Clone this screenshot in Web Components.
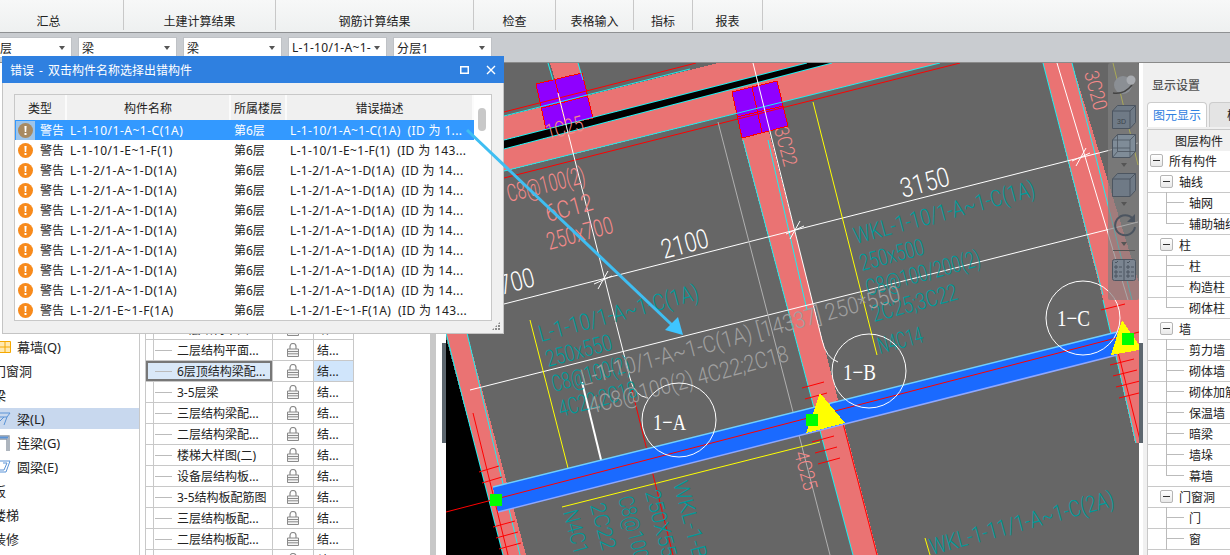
<!doctype html>
<html lang="zh">
<head>
<meta charset="utf-8">
<title>错误</title>
<style>
  html, body { margin: 0; height: 100%; overflow: hidden; background: #fff; }
  body { font: 12px "Noto Sans", "Noto Sans CJK SC", sans-serif; color: #222; }
</style>
</head>
<body>
<gd-app></gd-app>
<script>
const FONT = `"Noto Sans", "Noto Sans CJK SC", sans-serif`;

class GdRibbon extends HTMLElement {
  constructor() {
    super();
    this.attachShadow({ mode: "open" });
    const groups = [["汇总", 124, 26], ["土建计算结果", 152], ["钢筋计算结果", 198], ["检查", 82], ["表格输入", 78], ["指标", 59], ["报表", 70]];
    this.shadowRoot.innerHTML = `
      <style>
        :host { display: flex; height: 32px; background: linear-gradient(#f7f8f8, #eef0f0); border-bottom: 1px solid #8f9193; box-sizing: content-box; }
        div { box-sizing: border-box; height: 30px; border-right: 1px solid #c8c8c8; text-align: center; padding-top: 13px; line-height: 18px; font-size: 12px; color: #222; }
      </style>
      ${groups.map(([name, w, pr = 0]) => `<div style="width:${w}px;padding-right:${pr}px">${name}</div>`).join("")}
    `;
  }
}
customElements.define("gd-ribbon", GdRibbon);

class GdSelect extends HTMLElement {
  constructor() {
    super();
    this.attachShadow({ mode: "open" });
    this.shadowRoot.innerHTML = `
      <style>
        :host { display: flex; align-items: center; box-sizing: border-box; width: 99px; height: 21px; background: #fff; border: 1px solid #bfc2c6; padding: 0 3px; font-size: 12px; color: #222; white-space: nowrap; overflow: hidden; }
        .v { flex: 1; overflow: hidden; letter-spacing: .3px; }
        .a { width: 0; height: 0; margin: 0 3px 0 3px; border: 3.5px solid transparent; border-top: 4px solid #555; border-bottom: 0; }
      </style>
      <span class="v"><slot></slot></span><span class="a"></span>
    `;
  }
}
customElements.define("gd-select", GdSelect);

class GdToolbar extends HTMLElement {
  constructor() {
    super();
    this.attachShadow({ mode: "open" });
    this.shadowRoot.innerHTML = `
      <style>
        :host { display: flex; gap: 6px; height: 25px; padding-top: 4px; background: #c9ccd0; border-bottom: 1px solid #8a8a8a; }
        .first { margin-left: -27px; padding-left: 26px; }
      </style>
      <gd-select class="first">层</gd-select>
      <gd-select>梁</gd-select>
      <gd-select>梁</gd-select>
      <gd-select>L-1-10/1-A~1-</gd-select>
      <gd-select>分层1</gd-select>
    `;
  }
}
customElements.define("gd-toolbar", GdToolbar);

class GdNav extends HTMLElement {
  constructor() {
    super();
    this.attachShadow({ mode: "open" });
    const icons = {
      wall: `<svg width="11" height="12" viewBox="0 0 11 12"><path d="M0 .5h10.5v11H0M0 6h10.5M5 .5v11" fill="#ffe9b0" stroke="#f5a800"/></svg>`,
      beam: `<svg width="11" height="14" viewBox="0 0 11 14"><path d="M0 1h10L7 5H0M7 5l-3 8M0 9l4-4" fill="none" stroke="#5a93d6"/></svg>`,
      link: `<svg width="11" height="16" viewBox="0 0 11 16"><path d="M0 1h9v15M0 4h7v12" fill="none" stroke="#8c96a3" stroke-width="1.4"/><path d="M0 2.5h8" stroke="#5a93d6" stroke-width="2"/></svg>`,
      ring: `<svg width="11" height="14" viewBox="0 0 11 14"><path d="M0 1h10L6 12H0M3 3h4L4 10H0" fill="none" stroke="#5a93d6"/></svg>`
    };
    const rows = [["wall", "幕墙(Q)"], ["", "门窗洞"], ["", "梁"], ["beam", "梁(L)", true], ["link", "连梁(G)"], ["ring", "圆梁(E)"], ["", "板"], ["", "楼梯"], ["", "装修"]];
    this.shadowRoot.innerHTML = `
      <style>
        :host { display: flex; flex-direction: column; gap: 3px; box-sizing: border-box; width: 140px; padding-top: 273px; border-right: 1px solid #c8c8c8; overflow: hidden; font-size: 13px; color: #222; }
        .r { display: flex; align-items: center; flex: none; height: 21px; white-space: nowrap; }
        .r.on { background: #c8d8ee; }
        .i { display: flex; width: 17px; }
        .t { margin-left: -7px; }
      </style>
      ${rows.map(([icon, text, on]) => `<div class="r${on ? " on" : ""}">${icon ? `<span class="i">${icons[icon]}</span>${text}` : `<span class="t">${text}</span>`}</div>`).join("")}
    `;
  }
}
customElements.define("gd-nav", GdNav);

class GdLayerTable extends HTMLElement {
  constructor() {
    super();
    this.attachShadow({ mode: "open" });
    const names = ["二层结构平面...", "二层结构平面...", "6层顶结构梁配...", "3-5层梁", "三层结构梁配...", "二层结构梁配...", "楼梯大样图(二)", "设备层结构板...", "3-5结构板配筋图", "三层结构板配...", "二层结构板配...", ""];
    const lock = `<svg width="12" height="14" viewBox="0 0 12 14"><path d="M3 6V3.5a3 3 0 0 1 6 0V6" fill="none" stroke="#8a8a8a" stroke-width="1.2"/><path d="M.5 6h11v7.500H.5zM.5 8.500h11M.5 10.800h11" fill="#f4f4f4" stroke="#8a8a8a"/></svg>`;
    this.shadowRoot.innerHTML = `
      <style>
        :host { display: block; box-sizing: border-box; width: 209px; margin-left: 5px; padding-top: 256px; overflow: hidden; font-size: 12px; color: #222; border-left: 1px solid #c8c8c8; }
        .r { display: grid; grid-template-columns: 8px 119px 41px 40px; height: 21px; box-sizing: border-box; border-bottom: 1px solid #c8c8c8; }
        .r > div { display: flex; align-items: center; white-space: nowrap; border-right: 1px solid #c8c8c8; }
        .name::before { content: ""; width: 17px; height: 1px; margin: 0 5px 0 1px; background: #bbb; flex: none; }
        .lock { justify-content: center; }
        .kind { padding-left: 3px; }
        .on .kind { background: #d0e5fb; }
        .on .first, .on .name { background: #d9e8f8; }
        .on .first { box-shadow: inset 2px 2px 0 #777, inset 0 -2px 0 #777; border-right: 0; }
        .on .name { box-shadow: inset -2px 2px 0 #777, inset 0 -2px 0 #777; }
      </style>
      ${names.map((n, i) => `
        <div class="r${i === 2 ? " on" : ""}">
          <div class="first"></div><div class="name">${n}</div><div class="lock">${lock}</div><div class="kind">结...</div>
        </div>`).join("")}
    `;
  }
}
customElements.define("gd-layer-table", GdLayerTable);

class GdCadView extends HTMLElement {
  constructor() {
    super();
    this.attachShadow({ mode: "open" });
    const L = (x1, y1, x2, y2, c = "#fff", w = 1) => `<line x1="${x1}" y1="${y1}" x2="${x2}" y2="${y2}" stroke="${c}" stroke-width="${w}"/>`;
    const P = (pts, c, extra = "") => `<polygon points="${pts}" fill="${c}" ${extra}/>`;
    const T = (x, y, a, len, size, c, s, fam = "c") =>
      `<text class="${fam}" transform="translate(${x} ${y}) rotate(${a})" font-size="${size}" fill="${c}" textLength="${len}" lengthAdjust="spacingAndGlyphs">${s}</text>`;
    const X = (x, y) => L(x - 5, y + 9, x + 5, y - 9) + L(x - 9, y + 4, x + 9, y - 4);
    const PINK = "#ea7373", CY = "#19f0f0", TEAL = "#009a9a", SALMON = "#f58a8a", GR = "#a0a0a0";
    const hatch = (x, y, n, w = 24, step = 11) => { let s = ""; for (let i = 0; i < n; i++) s += L(x + i * 3, y + i * step, x + i * 3 + w, y + i * step - 6, "#f00"); return s; };
    const square = (pts, cross) => P(pts, "#8f00ff", `stroke="#f00" stroke-width="1"`) + cross;

    this.shadowRoot.innerHTML = `
      <style>
        :host { display: block; width: 693px; overflow: hidden; background: #666; }
        svg { display: block; }
        .c { font-family: Roboto, "Liberation Sans", sans-serif; font-weight: 300; }
        .s { font-family: "Liberation Serif", serif; }
      </style>
      <svg width="693" height="492" viewBox="446 63 693 492" shape-rendering="crispEdges">
        ${P("446,338 504,555 446,555", "#000")}

        ${P("550,63 578,63 597,130 572,136", PINK)}
        ${P("741,135 768,128 878,555 853,555", PINK)}
        ${P("1043,63 1072,63 1139,283 1139,443 1135,443 1103,300", PINK)}
        ${P("446,333 467,333 526,555 503,555", PINK)}

        ${P("446,131 718,63 940,63 446,186", PINK)}
        ${P("446,155 807,63 832,63 446,164", "#000")}

        ${square("536,84 582,73 593,118 546,129", L(542, 108, 587, 96, "#f00") + L(555, 80, 566, 125, "#f00"))}
        ${square("732,92 777,81 788,126 742,138", L(737, 117, 783, 106, "#f00") + L(752, 87, 762, 132, "#f00"))}

        <g shape-rendering="geometricPrecision">
        ${L(504, 112, 696, 63, "#f00")}
        ${L(504, 116, 690, 69, CY)}
        ${L(504, 140, 807, 63, CY)}
        ${L(504, 149, 832, 63, CY)}
        ${L(504, 171, 940, 63, CY)}
        ${L(504, 178, 960, 63, "#f00")}
        ${L(548, 63, 553, 80, CY)}${L(578, 63, 583, 80, CY)}
        ${L(743, 140, 788, 310, CY)}${L(768, 140, 807, 310, CY)}${L(1043, 63, 1103, 295, CY)}${L(1072, 63, 1132, 300, CY)}${L(1103, 300, 1136, 443, CY)}
        ${L(446, 333, 503, 555, CY)}${L(467, 333, 520, 555, CY)}
        ${L(788, 310, 853, 555, CY)}

        ${L(504, 304, 1138, 143)}
        ${L(470, 390, 1138, 222)}
        ${X(603, 280)}${X(795, 230)}${X(1081, 157)}
        ${L(558, 93, 610, 300)}<path d="M610 300L630 378Q634 396 648 398" fill="none" stroke="#fff"/>
        ${L(582, 382, 604, 472, "#fff", 2)}
        ${L(753, 63, 812, 300)}<path d="M812 300L822 340Q826 358 838 362" fill="none" stroke="#fff"/>
        ${L(718, 122, 830, 555, "#b0b0b0")}
        ${L(1057, 63, 1128, 300)}
        ${L(813, 102, 877, 355, "#ff0")}
        ${L(530, 320, 568, 468, "#ff0")}
        ${L(562, 507, 820, 442, "#ff0")}
        ${L(925, 538, 930, 555, "#ff0")}
        ${L(1113, 63, 1138, 165, "#ff0")}
        ${L(632, 390, 673, 555, "#f00")}
        ${L(837, 400, 877, 555, "#f00")}
        ${L(1115, 340, 1140, 440, "#f00")}
        ${L(473, 413, 508, 555, "#f00")}

        ${T(548, 140, -15, 38, 22, SALMON, "1C25")}
        ${T(509, 202, -14, 80, 24, SALMON, "C8@100(2)")}
        ${T(548, 222, -15, 48, 24, SALMON, "6C12")}
        ${T(549, 250, -15, 68, 24, SALMON, "250x700")}
        ${T(774, 129, 75, 40, 20, SALMON, "3C22")}
        ${T(1084, 73, 75, 40, 20, SALMON, "3C20")}
        ${T(794, 453, 75, 40, 20, SALMON, "4C25")}

        ${T(664, 259, -15, 48, 27, "#fff", "2100")}
        ${T(490, 298, -15, 48, 27, "#fff", "1700")}
        ${T(903, 198, -15, 50, 27, "#fff", "3150")}

        ${T(856, 244, -15, 187, 23, TEAL, "WKL-1-10/1-A~1-C(1A)")}
        ${T(862, 271, -15, 66, 23, TEAL, "250x500")}
        ${T(868, 296, -15, 118, 23, TEAL, "C8@100/200(2)")}
        ${T(874, 322, -15, 88, 23, TEAL, "2C25;3C22")}
        ${T(880, 354, -15, 46, 23, TEAL, "N4C14")}
        ${T(541, 342, -15, 165, 23, TEAL, "L-1-10/1-A~1-C(1A)")}
        ${T(548, 367, -15, 68, 23, TEAL, "250x550")}
        ${T(554, 392, -15, 80, 23, TEAL, "C8@100(2)")}
        ${T(561, 417, -15, 80, 23, TEAL, "4C22;2C18")}
        ${T(932, 555, -15, 190, 23, TEAL, "WKL-1-11/1-A~1-C(2A)")}
        ${T(673, 483, 75, 80, 21, TEAL, "WKL-1-B")}
        ${T(645, 492, 75, 80, 21, TEAL, "250X550")}
        ${T(618, 498, 75, 65, 21, TEAL, "C8@100")}
        ${T(590, 505, 75, 48, 21, TEAL, "2C22")}
        ${T(563, 512, 75, 55, 21, TEAL, "N4C14")}

        ${T(583, 386, -15, 330, 23, GR, "L-1-10/1-A~1-C(1A) [14337] 250*550")}
        ${T(591, 414, -15, 206, 23, GR, "4C8@100(2) 4C22;2C18")}
        </g>

        ${P("493,487 1117,332 1117,355 498,512", "#1a6aff")}
        <g shape-rendering="geometricPrecision">
        ${L(493, 487, 1117, 332, "#6fd0ff", 1.5)}
        ${L(498, 512, 1117, 355, "#8fa8ff", 1.5)}
        ${L(446, 512, 1120, 337, "#f00")}
        ${L(1120, 337, 1139, 332, "#f00")}
        ${hatch(479, 472, 2, 20)}
        ${hatch(493, 527, 3, 22)}
        ${hatch(802, 388, 2, 22)}
        ${hatch(812, 442, 3, 22)}
        ${hatch(1101, 310, 1, 24)}
        ${hatch(1110, 365, 4, 24)}
        </g>

        ${P("820,393 845,423 806,433", "#ff0")}
        ${P("1122,320 1139,345 1139,350 1111,355", "#ff0")}
        ${P("490,494 502,494 502,506 490,506", "#0f0")}
        ${P("806,414 818,414 818,426 806,426", "#0f0")}
        ${P("1122,333 1134,333 1134,345 1122,345", "#0f0")}

        <g fill="none" stroke="#fff" shape-rendering="geometricPrecision">
          <circle cx="679" cy="420" r="37"/>
          <circle cx="869" cy="371" r="37"/>
          <circle cx="1083" cy="318" r="37"/>
        </g>
        <g shape-rendering="geometricPrecision">
        ${T(653, 430, 0, 33, 23, "#fff", "1−A", "s")}
        ${T(843, 380, 0, 33, 23, "#fff", "1−B", "s")}
        ${T(1057, 326, 0, 33, 23, "#fff", "1−C", "s")}
        </g>
      </svg>
    `;
  }
}
customElements.define("gd-cad-view", GdCadView);

class GdViewTools extends HTMLElement {
  constructor() {
    super();
    this.attachShadow({ mode: "open" });
    const ink = "#4c5560", fill = "#6f7a86";
    const cube = `<svg width="24" height="24" viewBox="0 0 24 24"><path d="M.5 6l5-5.500h18v17l-5.500 6H.5z" fill="${fill}" stroke="${ink}"/><path d="M.5 6H18v17.500M18 6l5.500-5.500" fill="none" stroke="${ink}"/></svg>`;
    this.shadowRoot.innerHTML = `
      <style>
        :host { position: absolute; left: 1108px; top: 63px; width: 31px; height: 237px; display: flex; flex-direction: column; align-items: center; padding-top: 11px; box-sizing: border-box; background: rgba(128,128,128,.68); border-radius: 2px; }
        svg { display: block; flex: none; }
        i { display: block; width: 0; height: 0; border: 3.500px solid transparent; border-top: 4px solid #555; border-bottom: 0; }
        hr { width: 22px; height: 1px; border: 0; margin: 4px 0 0; background: #555; flex: none; }
        text { font: 7px "Liberation Sans", sans-serif; fill: #3c444c; }
      </style>
      <svg width="24" height="22" viewBox="0 0 24 22"><ellipse cx="11" cy="11" rx="9" ry="9" fill="#8b8f94"/><path d="M1 19Q12 21 20 11" fill="none" stroke="#444" stroke-width="1.500"/><circle cx="19" cy="6" r="4.500" fill="#a8abb0"/></svg>
      <svg style="margin-top:9px" width="24" height="24" viewBox="0 0 24 24"><path d="M.5 6l5-5.500h18v17l-5.500 6H.5z" fill="${fill}" stroke="${ink}"/><path d="M.5 6H18v17.500M18 6l5.500-5.500" fill="none" stroke="${ink}"/><text x="5" y="19">3D</text></svg>
      <svg style="margin-top:5px" width="24" height="24" viewBox="0 0 24 24"><path d="M.5 6l5-5.500h18v17l-5.500 6H.5z" fill="#7f8c98" stroke="${ink}"/><path d="M.5 6H18v17.500M18 6l5.500-5.500M5.500 .5v17h18M5.500 17.500L.5 23.500M.5 14H18" fill="none" stroke="${ink}" stroke-width=".8"/></svg>
      <i style="margin-top:5px"></i>
      <span style="margin-top:6px;display:block">${cube}</span>
      <i style="margin-top:5px"></i>
      <svg style="margin-top:7px" width="24" height="24" viewBox="0 0 24 24"><path d="M21 6A10 10 0 1 0 23 14" fill="none" stroke="#4c5560" stroke-width="2"/><path d="M23 1v8h-8z" fill="#4c5560"/></svg>
      <i style="margin-top:5px"></i>
      <hr>
      <svg style="margin-top:6px" width="24" height="24" viewBox="0 0 24 24"><rect x=".5" y="2.500" width="23" height="21" rx="2" fill="#7b8591" stroke="${ink}"/><path d="M12 3v20M3 9h2v2H3zM3 14h2v2H3zM3 18h2v2H3zM7 10h3M7 15h3M7 19h3M15 9h2v2h-2zM15 14h2v2h-2zM15 18h2v2h-2zM19 10h3M19 15h3M19 19h3M3 5l1 1 2-2M15 5l1 1 2-2" fill="none" stroke="${ink}"/></svg>
    `;
  }
}
customElements.define("gd-view-tools", GdViewTools);

class GdTreeRow extends HTMLElement {
  constructor() {
    super();
    this.attachShadow({ mode: "open" });
    const level = Number(this.getAttribute("level"));
    const open = level < 2;
    const last = this.hasAttribute("last");
    this.shadowRoot.innerHTML = `
      <style>
        :host { display: flex; align-items: center; position: relative; height: 21px; box-sizing: border-box; border-bottom: 1px solid #c8c8c8; font-size: 12px; color: #222; white-space: nowrap; padding-left: ${level === 0 ? 21 : level === 1 ? 31 : 41}px; background: #fff; }
        .box { position: absolute; top: 3px; left: ${level === 0 ? 2 : 12}px; width: 13px; height: 13px; box-sizing: border-box; border: 1px solid #b5b5b5; border-radius: 2px; background: linear-gradient(#fff, #e8e8e8); }
        .box::after { content: ""; position: absolute; left: 2px; right: 2px; top: 5px; height: 1px; background: #333; }
        .h { position: absolute; left: 18px; width: 18px; top: 9px; height: 1px; background: #bbb; }
        .v { position: absolute; left: 18px; width: 1px; top: -1px; height: ${last ? 11 : 22}px; background: #bbb; }
      </style>
      ${open ? `<span class="box"></span>` : `<span class="h"></span><span class="v"></span>`}
      <slot></slot>
    `;
  }
}
customElements.define("gd-tree-row", GdTreeRow);

class GdPanel extends HTMLElement {
  constructor() {
    super();
    this.attachShadow({ mode: "open" });
    const tree = [[0, "所有构件"], [1, "轴线"], [2, "轴网"], [2, "辅助轴线", 1], [1, "柱"], [2, "柱"], [2, "构造柱"], [2, "砌体柱", 1], [1, "墙"], [2, "剪力墙"], [2, "砌体墙"], [2, "砌体加筋"], [2, "保温墙"], [2, "暗梁"], [2, "墙垛"], [2, "幕墙", 1], [1, "门窗洞"], [2, "门"], [2, "窗"]];
    this.shadowRoot.innerHTML = `
      <style>
        :host { display: flex; flex-direction: column; flex: 1; min-width: 0; box-sizing: border-box; background: #f0f0f0; overflow: hidden; padding-left: 4px; font-size: 12px; color: #222; }
        .title { height: 39px; flex: none; padding: 14px 0 0 5px; box-sizing: border-box; font-weight: 500; color: #555; white-space: nowrap; line-height: 18px; }
        .tabs { display: flex; gap: 2px; height: 25px; margin-bottom: 2px; flex: none; white-space: nowrap; }
        .tab { display: flex; align-items: center; justify-content: center; width: 60px; flex: none; box-sizing: border-box; border: 1px solid #ccc; border-bottom: 0; border-radius: 4px 4px 0 0; background: #e4e4e4; color: #222; }
        .tab.on { background: #fff; color: #2f80e0; }
        .head { display: flex; height: 22px; flex: none; box-sizing: border-box; align-items: center; justify-content: center; background: #f0f0f0; border: 1px solid #c8c8c8; border-bottom: 0; white-space: nowrap; width: 104px; }
        .rows { flex: 1; width: 120px; background: #fff; border-left: 1px solid #c8c8c8; }
      </style>
      <div class="title">显示设置</div>
      <div class="tabs"><div class="tab on">图元显示</div><div class="tab">楼层</div></div>
      <div class="head">图层构件</div>
      <div class="rows">
        ${tree.map(([lv, s, last]) => `<gd-tree-row level="${lv}"${last ? " last" : ""}>${s}</gd-tree-row>`).join("")}
      </div>
    `;
  }
}
customElements.define("gd-panel", GdPanel);

class GdErrorDialog extends HTMLElement {
  constructor() {
    super();
    this.attachShadow({ mode: "open" });
    const rows = [
      ["L-1-10/1-A~1-C(1A)", "L-1-10/1-A~1-C(1A)  (ID 为 1..."],
      ["L-1-10/1-E~1-F(1)", "L-1-10/1-E~1-F(1)  (ID 为 143..."],
      ...Array(7).fill(["L-1-2/1-A~1-D(1A)", "L-1-2/1-A~1-D(1A)  (ID 为 14..."]),
      ["L-1-2/1-E~1-F(1A)", "L-1-2/1-E~1-F(1A)  (ID 为 143..."]
    ];
    const warn = `<svg width="15" height="15" viewBox="0 0 15 15"><circle cx="7.500" cy="7.500" r="7.500" fill="currentColor"/><path d="M6.400 3h2.200l-.4 6H6.800zM6.500 10h2v2h-2z" fill="#fff"/></svg>`;
    this.shadowRoot.innerHTML = `
      <style>
        :host { position: absolute; left: 2px; top: 56px; width: 502px; height: 278px; box-sizing: border-box; background: #f0f0f0; border: 1px solid #c4c4c4; border-top: 0; display: flex; flex-direction: column; font-size: 12px; color: #222; }
        .bar { display: flex; align-items: center; height: 27px; flex: none; background: #2f80e0; color: #fff; padding: 0 8px 0 8px; font-size: 12px; margin: 0 -1px; white-space: pre; word-spacing: 2px; }
        .bar .s { flex: 1; }
        .bar svg { display: block; margin-left: 20px; }
        .bar svg + svg { margin-left: 16px; }
        .table { position: relative; margin: 11px 11px 0 11px; height: 227px; box-sizing: border-box; border: 1px solid #c8c8c8; background: #fff; overflow: hidden; }
        .head, .row { display: grid; grid-template-columns: 52px 164px 56px 187px; }
        .head { height: 25px; background: #f0f0f0; width: 459px; }
        .head div { display: flex; align-items: center; justify-content: center; border-right: 2px solid #fbfbfb; }
        .row { height: 20px; width: 459px; align-items: center; white-space: pre; }
        .row.on { background: #3399ff; color: #fff; }
        .row > div { overflow: hidden; }
        .type { display: flex; align-items: center; color: #222; }
        .on .type { color: #fff; }
        .ico { display: flex; align-items: center; justify-content: center; width: 19px; height: 19px; margin-right: 5px; margin-left: 1px; color: #f78a1c; }
        .on .ico { background: #9cc4ea; color: #a88a62; }
        .name { padding-left: 3px; letter-spacing: .5px; }
        .floor { padding-left: 3px; }
        .desc { padding-left: 3px; letter-spacing: .35px; }
        .thumb { position: absolute; left: 463px; top: 13px; width: 8px; height: 23px; border-radius: 4px; background: #c8c8c8; }
        .grip { position: absolute; right: 3px; bottom: 3px; width: 8px; height: 8px; background: radial-gradient(circle at 1px 1px, #8a8a8a 1px, transparent 1px) 0 0 / 3px 3px; clip-path: polygon(100% 0, 100% 100%, 0 100%); }
      </style>
      <div class="bar"><span class="s">错误 - 双击构件名称选择出错构件</span>
        <svg width="10" height="10" viewBox="0 0 10 10"><rect x=".75" y="1.750" width="7.500" height="6.500" fill="none" stroke="#fff" stroke-width="1.500"/></svg>
        <svg width="10" height="10" viewBox="0 0 10 10"><path d="M1 1l8 8M9 1l-8 8" stroke="#fff" stroke-width="1.400"/></svg>
      </div>
      <div class="table">
        <div class="head"><div>类型</div><div>构件名称</div><div>所属楼层</div><div>错误描述</div></div>
        ${rows.map(([n, d], i) => `
          <div class="row${i === 0 ? " on" : ""}">
            <div class="type"><span class="ico">${warn}</span>警告</div>
            <div class="name">${n}</div><div class="floor">第6层</div><div class="desc">${d}</div>
          </div>`).join("")}
        <div class="thumb"></div>
      </div>
      <div class="grip"></div>
    `;
  }
}
customElements.define("gd-error-dialog", GdErrorDialog);

class GdApp extends HTMLElement {
  constructor() {
    super();
    this.attachShadow({ mode: "open" });
    this.shadowRoot.innerHTML = `
      <style>
        :host { display: flex; flex-direction: column; position: relative; width: 1230px; height: 555px; overflow: hidden; background: #fff; font-family: ${FONT}; }
        .work { display: flex; flex: 1; min-height: 0; background: #fff; }
        .scroll { width: 6px; margin-left: 76px; background: #c8c8c8; flex: none; }
        .gap { width: 6px; flex: none; }
        .strip { width: 4px; flex: none; display: flex; flex-direction: column; }
        .strip b { display: block; height: 100px; margin-top: 280px; background: #5c666e; }
        .arrow { position: absolute; left: 0; top: 0; pointer-events: none; }
      </style>
      <gd-ribbon></gd-ribbon>
      <gd-toolbar></gd-toolbar>
      <div class="work">
        <gd-nav></gd-nav>
        <gd-layer-table></gd-layer-table>
        <div class="scroll"></div>
        <div class="gap"></div>
        <div class="strip"><b></b></div>
        <gd-cad-view></gd-cad-view>
        <div class="strip"><b></b></div>
        <gd-panel></gd-panel>
      </div>
      <gd-view-tools></gd-view-tools>
      <gd-error-dialog></gd-error-dialog>
      <svg class="arrow" width="1230" height="555" viewBox="0 0 1230 555">
        <line x1="467" y1="130" x2="672" y2="325" stroke="#3fbef2" stroke-width="3"/>
        <polygon points="683,335 665,330 678,317" fill="#3fc5ff"/>
      </svg>
    `;
  }
}
customElements.define("gd-app", GdApp);
</script>
</body>
</html>
